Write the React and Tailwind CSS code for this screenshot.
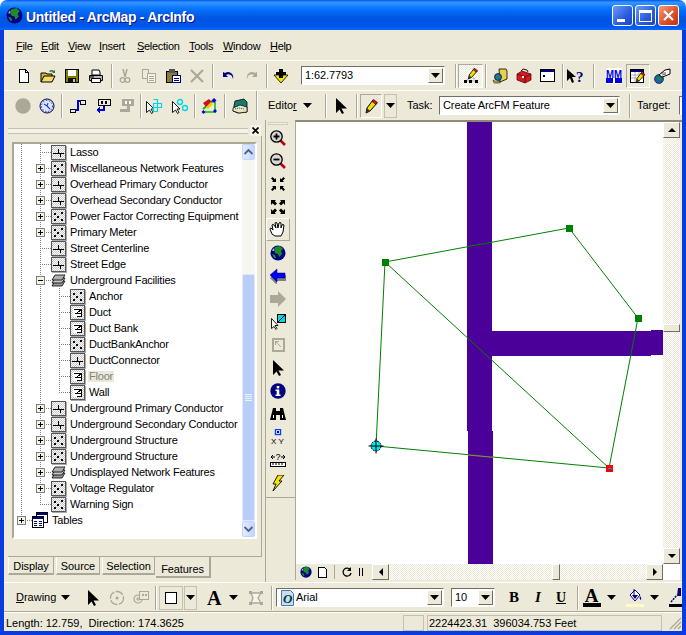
import React from 'react';

const dither = 'bg-[repeating-conic-gradient(#ffffff_0%_25%,#ece9d8_0%_50%)] bg-[length:2px_2px]';

const Svg = ({ w = 16, h = 16, crisp = false, children }) => (
  <svg width={w} height={h} viewBox={`0 0 ${w} ${h}`} shapeRendering={crisp ? 'crispEdges' : 'auto'} className="block shrink-0">
    {children}
  </svg>
);

const Globe = ({ size = 16 }) => (
  <svg width={size} height={size} viewBox="0 0 16 16" className="block shrink-0">
    <circle cx="8" cy="8" r="7.5" fill="#000080" />
    <path d="M5 2l5-1 3 3-2 2 1 3-3 3-1-3-3-1-1-3z" fill="#1f8a2c" />
    <path d="M2 9l3 1 1 3-2 0z" fill="#1f8a2c" />
    <path d="M2 6a6 6 0 0 1 2-3l0 3z" fill="#9db3c8" />
  </svg>
);

const Pencil = () => (
  <>
    <path d="M10 2l4 3-7 8-4 2 1-5z" fill="#f2e200" stroke="#000" strokeWidth="1" />
    <path d="M10.500 1.500l4 3-1.500 2-4-3z" fill="#e8101c" stroke="#000" strokeWidth=".6" />
    <path d="M4 10l3 3-4 2z" fill="#333" />
  </>
);

const icons = {
  newDoc: (
    <Svg crisp><path d="M3.500 1.500h6l3 3v10h-9z" fill="#fff" stroke="#000" /><path d="M9.500 1.500v3h3" fill="none" stroke="#000" /></Svg>
  ),
  open: (
    <Svg>
      <path d="M1 14V5h5l1 1h5v2" fill="#d8b838" stroke="#000" />
      <path d="M1 14l3-6h11l-3 6z" fill="#f3dc6a" stroke="#000" />
      <path d="M9 3q3-2 5 0l1-1v3h-3l1-1q-2-1-3 0z" fill="#2a7a2a" />
    </Svg>
  ),
  save: (
    <Svg crisp>
      <rect x="1.500" y="1.500" width="13" height="13" fill="#808000" stroke="#000" />
      <rect x="4" y="2" width="8" height="6" fill="#fff" />
      <rect x="4" y="10" width="8" height="4" fill="#111" />
      <rect x="9" y="11" width="2" height="3" fill="#c0c0c0" />
    </Svg>
  ),
  print: (
    <Svg>
      <path d="M4 7V2h7l1 2v3z" fill="#fff" stroke="#000" />
      <path d="M1.500 7.500h13v5h-13z" fill="#b8b8b8" stroke="#000" />
      <path d="M3.500 10.500h9v4h-9z" fill="#fff" stroke="#000" />
      <path d="M2 9h4" stroke="#000" />
    </Svg>
  ),
  cut: (
    <Svg>
      <path d="M6 1l2 8M10 1L8 9" stroke="#aca899" strokeWidth="1.500" fill="none" />
      <circle cx="5.500" cy="12" r="2.300" fill="none" stroke="#aca899" strokeWidth="1.300" />
      <circle cx="10.500" cy="12" r="2.300" fill="none" stroke="#aca899" strokeWidth="1.300" />
    </Svg>
  ),
  copy: (
    <Svg crisp>
      <path d="M1.500 1.500h6v9h-6z" fill="#ece9d8" stroke="#aca899" />
      <path d="M6.500 5.500h8v9h-8z" fill="#f6f4ea" stroke="#aca899" />
      <path d="M8 8h5M8 10h5M8 12h5" stroke="#aca899" />
    </Svg>
  ),
  paste: (
    <Svg crisp>
      <rect x="1.500" y="3.500" width="11" height="11" fill="#8c7a3c" stroke="#000" />
      <rect x="4" y="1" width="6" height="4" fill="#555" />
      <rect x="7.500" y="7.500" width="8" height="7" fill="#fff" stroke="#000080" />
      <path d="M9 10h5M9 12h5" stroke="#000080" />
    </Svg>
  ),
  del: (
    <Svg><path d="M2 2l12 12M14 2L2 14" stroke="#aca899" strokeWidth="2.200" /></Svg>
  ),
  undo: (
    <Svg><path d="M3 4v5h5L6 7q3-2 6 1l1 3q1-4-2-6-3-2-6 0z" fill="#000080" /></Svg>
  ),
  redo: (
    <Svg><path d="M13 4v5H8l2-2q-3-2-6 1l-1 3q-1-4 2-6 3-2 6 0z" fill="#aca899" /></Svg>
  ),
  addData: (
    <Svg>
      <path d="M1 7h14l-7 8z" fill="#f5e400" stroke="#000" strokeWidth=".8" />
      <path d="M6 1h4v3h3v3H3V4h3z" fill="#000" />
      <path d="M6 7h4v3H6z" fill="#000" />
    </Svg>
  ),
  editTool: (
    <Svg>
      <path d="M3 13l5-6 5 6z" fill="none" stroke="#666" strokeDasharray="1 1" />
      <rect x="1" y="12" width="3" height="3" fill="#000" /><rect x="6" y="12" width="3" height="3" fill="#000" /><rect x="12" y="12" width="3" height="3" fill="#000" />
      <g transform="translate(3 -1) scale(.8)"><Pencil /></g>
    </Svg>
  ),
  catalog: (
    <Svg>
      <path d="M7 1h7l1 2v8l-7 3z" fill="#e8d14a" stroke="#000" strokeWidth=".8" />
      <circle cx="6" cy="9" r="3.500" fill="#1f6fc0" stroke="#000" strokeWidth=".7" />
      <path d="M4 8h3v2H4z" fill="#1f8a2c" />
      <path d="M1 12l4 2 3-1v2H2z" fill="#d8c030" stroke="#000" strokeWidth=".5" />
    </Svg>
  ),
  toolbox: (
    <Svg>
      <path d="M1 6l5-3 9 3v6l-6 3-8-3z" fill="#d01a24" stroke="#400" strokeWidth=".7" />
      <path d="M5 3l2-2 4 1 1 2" fill="none" stroke="#400" />
      <path d="M1 6l8 3 6-3M9 9v6" fill="none" stroke="#600" strokeWidth=".8" />
      <rect x="6" y="8" width="2" height="2" fill="#fff" />
    </Svg>
  ),
  cmd: (
    <Svg crisp>
      <rect x=".500" y="1.500" width="14" height="12" fill="#fff" stroke="#000" />
      <rect x="1" y="2" width="13" height="2" fill="#000080" />
      <path d="M3 7l2 1-2 1" fill="none" stroke="#000" />
    </Svg>
  ),
  whatsThis: (
    <Svg w={20}>
      <path d="M1 1v12l3-3 2 5 2-1-2-5h4z" fill="#000" />
      <text x="10" y="14" fontFamily="Liberation Serif, serif" fontWeight="700" fontSize="15" fill="#000080">?</text>
    </Svg>
  ),
  mm: (
    <Svg>
      <rect x="0" y="0" width="16" height="16" fill="#fff" />
      <rect x="0" y="10" width="7" height="5" fill="#0000e0" />
      <rect x="9" y="10" width="7" height="5" fill="#0000e0" />
      <text x="0" y="10" fontFamily="Liberation Sans, sans-serif" fontWeight="700" fontSize="10" textLength="16" lengthAdjust="spacingAndGlyphs" fill="#0000e0">MM</text>
    </Svg>
  ),
  tablePen: (
    <Svg>
      <rect x=".500" y="1.500" width="13" height="13" fill="#fff" stroke="#000" />
      <rect x="1" y="2" width="12" height="2" fill="#000080" />
      <path d="M1 7h12M1 10h12M5 4v10M9 4v10" stroke="#808080" strokeWidth=".6" />
      <g transform="translate(4 3) scale(.75)"><Pencil /></g>
    </Svg>
  ),
  handGlobe: (
    <Svg w={18}>
      <circle cx="6" cy="11" r="4.500" fill="#1860b0" stroke="#000" strokeWidth=".6" />
      <path d="M4 9h4v3H5z" fill="#1f8a2c" />
      <path d="M6 7l6-5 5-1v5l-5 2-3 1z" fill="#fff" stroke="#000" />
      <path d="M8 5l5 0M9 7l4-1" stroke="#000" strokeWidth=".6" />
    </Svg>
  ),
  grayDot: (
    <Svg><circle cx="8" cy="8" r="7.700" fill="#aca899" /></Svg>
  ),
  clock: (
    <Svg>
      <circle cx="8" cy="8" r="7" fill="#dfe6ff" stroke="#000040" />
      <circle cx="8" cy="8" r="5.500" fill="none" stroke="#2040d0" strokeDasharray="1.500 1.500" />
      <path d="M5 6l3 2 3 3M8 8l1-3" stroke="#2040d0" strokeWidth="1.100" fill="none" />
    </Svg>
  ),
  flow: (
    <Svg crisp>
      <rect x=".500" y="11.500" width="5" height="3" fill="#ece9d8" stroke="#000" />
      <rect x="10.500" y="2.500" width="5" height="4" fill="#ece9d8" stroke="#000" />
      <path d="M5 12h3V3h3" fill="none" stroke="#0000d0" strokeWidth="2" />
    </Svg>
  ),
  flowBox: (
    <Svg crisp>
      <rect x="3.500" y="1.500" width="12" height="6" fill="#ece9d8" stroke="#000" />
      <rect x="6" y="3" width="2" height="3" fill="#000" /><rect x="10" y="3" width="2" height="3" fill="#000" />
      <path d="M9 8v4H3" fill="none" stroke="#0000d0" strokeWidth="2" />
      <path d="M1 12l4-3v6z" fill="#0000d0" />
    </Svg>
  ),
  flowBoxOff: (
    <Svg crisp>
      <rect x="3" y="1" width="12" height="7" fill="#aca899" />
      <rect x="6" y="3" width="2" height="3" fill="#fff" /><rect x="10" y="3" width="2" height="3" fill="#fff" />
      <path d="M9 8v4H1" fill="none" stroke="#aca899" strokeWidth="3" />
    </Svg>
  ),
  selCross: (
    <Svg w={18}>
      <path d="M1.500 3.500v11l3-2.500 2 3.500 1.500-1-2-3.500h3z" fill="#fff" stroke="#000" strokeWidth=".9" />
      <path d="M8.500 1.500h4v4h4v4h-4v4h-4v-4" fill="none" stroke="#00d8e8" strokeWidth="1.200" />
      <path d="M8.500 5.500v4h4v-4z" fill="none" stroke="#00d8e8" strokeWidth="1.200" />
    </Svg>
  ),
  selCircles: (
    <Svg w={18}>
      <path d="M1.500 3.500v11l3-2.500 2 3.500 1.500-1-2-3.500h3z" fill="#fff" stroke="#000" strokeWidth=".9" />
      <circle cx="9" cy="4" r="2.500" fill="none" stroke="#00d8e8" strokeWidth="1.400" />
      <circle cx="14" cy="10" r="2.500" fill="none" stroke="#00d8e8" strokeWidth="1.400" />
    </Svg>
  ),
  network: (
    <Svg>
      <path d="M2 11L13 2" stroke="#00c000" strokeWidth="2" />
      <path d="M4 14h10V4" stroke="#00c000" strokeWidth="1.500" fill="none" />
      <path d="M2 5l6-4 3 3-6 5z" fill="#d01020" />
      <path d="M5 9l5-5 2 2-5 5z" fill="#e8d000" />
      <path d="M13 0l2.500 2.500L13 5l-2.500-2.500z" fill="#0000e0" />
      <path d="M2.500 12l2 2-2 2-2-2z" fill="#0000e0" />
      <path d="M14 11l2 2-2 2-2-2z" fill="#0000e0" />
    </Svg>
  ),
  layout: (
    <Svg>
      <path d="M3 3l9-2 3 3v10l-9 1-5-2z" fill="#1a7a70" stroke="#000" strokeWidth=".8" />
      <path d="M1 10l7-3 7 2v5l-8 1-6-2z" fill="#e8e4c8" stroke="#000" strokeWidth=".7" />
      <path d="M3 11l4-1 5 1" stroke="#0a6a60" strokeDasharray="1 1" fill="none" />
    </Svg>
  ),
  cursor: (
    <Svg><path d="M3 0v15l3.500-3.500 2.500 4.500 2-1-2.500-4.500H14z" fill="#000" /></Svg>
  ),
  rotate: (
    <Svg>
      <circle cx="8" cy="8" r="6.500" fill="none" stroke="#aca899" strokeWidth="1.300" strokeDasharray="8 1.500" />
      <circle cx="8" cy="8" r="1.500" fill="#aca899" />
    </Svg>
  ),
  multi: (
    <Svg>
      <circle cx="5" cy="9" r="4" fill="none" stroke="#aca899" strokeWidth="1.200" />
      <path d="M3 9h4M5 7v4" stroke="#aca899" />
      <rect x="6.500" y="1.500" width="9" height="8" fill="#ece9d8" stroke="#aca899" />
      <path d="M9 4h2v2H9zM12 4h2v2h-2z" fill="#aca899" />
    </Svg>
  ),
  vertices: (
    <Svg>
      <path d="M3 3h10l-3 5 3 5H3l2-5z" fill="#f6f4ea" stroke="#aca899" strokeWidth="1.300" />
      <rect x="1" y="1" width="3" height="3" fill="#aca899" /><rect x="12" y="1" width="3" height="3" fill="#aca899" />
      <rect x="1" y="12" width="3" height="3" fill="#aca899" /><rect x="12" y="12" width="3" height="3" fill="#aca899" />
    </Svg>
  ),
  zoomIn: (
    <Svg>
      <path d="M10 10l5 5" stroke="#c00018" strokeWidth="2.600" />
      <circle cx="6.500" cy="6.500" r="5.700" fill="#d8d8d8" stroke="#000" strokeWidth="1.300" />
      <path d="M3.500 6.500h6M6.500 3.500v6" stroke="#000" strokeWidth="1.800" />
    </Svg>
  ),
  zoomOut: (
    <Svg>
      <path d="M10 10l5 5" stroke="#c00018" strokeWidth="2.600" />
      <circle cx="6.500" cy="6.500" r="5.700" fill="#d8d8d8" stroke="#000" strokeWidth="1.300" />
      <path d="M3.500 6.500h6" stroke="#000" strokeWidth="1.800" />
    </Svg>
  ),
  fixedIn: (
    <Svg>
      <path d="M6 6H2l1.200-1.200L1 2.500 2.500 1l2.300 2.200L6 2zM10 6h4l-1.200-1.200L15 2.500 13.500 1l-2.300 2.200L10 2zM6 10H2l1.200 1.200L1 13.500 2.500 15l2.300-2.200L6 14zM10 10h4l-1.200 1.200L15 13.500 13.500 15l-2.300-2.200L10 14z" fill="#000" />
    </Svg>
  ),
  fixedOut: (
    <Svg>
      <path d="M1 1h5L4.800 2.200 7 4.500 5 6.500 2.700 4.300 1 6zM15 1h-5l1.200 1.200L9 4.500l2 2 2.300-2.200L15 6zM1 15h5l-1.200-1.200L7 11.500l-2-2-2.300 2.200L1 10zM15 15h-5l1.200-1.200L9 11.500l2-2 2.300 2.200L15 10z" fill="#000" />
    </Svg>
  ),
  hand: (
    <Svg w={18} h={18}>
      <path d="M3 13L1 8q0-1 1-1l2 2-1-5q1-1 2 0l2 3-1-5q1-1 2 0l1 5 1-5q1-1 2 0v5l1-3q1-1 2 0l-1 7-2 4H6z" fill="#fff" stroke="#000" strokeWidth="1" />
    </Svg>
  ),
  back: (
    <Svg>
      <path d="M0 8l7-7v4h9v6H7v4z" fill="#808080" transform="translate(0 2)" />
      <path d="M0 7l7-6v4h8v5H7v4z" fill="#0000f0" stroke="#000080" strokeWidth=".5" />
    </Svg>
  ),
  forward: (
    <Svg><path d="M16 8L8 0v4H0v8h8v4z" fill="#aca899" /></Svg>
  ),
  selectEl: (
    <Svg>
      <path d="M1.500 4.500v10l2.500-2 2 3 1-1-2-3h3z" fill="#fff" stroke="#000" strokeWidth=".9" />
      <rect x="7.500" y=".500" width="8" height="8" fill="#00d8e8" stroke="#000" />
      <path d="M8 8l7-7" stroke="#000" />
    </Svg>
  ),
  selectOff: (
    <Svg crisp>
      <rect x="2.500" y="1.500" width="11" height="12" fill="#ece9d8" stroke="#aca899" strokeWidth="2" />
      <path d="M5 4l6 6M5 4v4M5 4h4" stroke="#aca899" fill="none" />
    </Svg>
  ),
  info: (
    <Svg>
      <circle cx="8" cy="8" r="7.700" fill="#000080" />
      <rect x="6.700" y="3" width="2.600" height="2.400" fill="#fff" />
      <path d="M5.500 6.500h3.800v5h1.200v1.500h-5v-1.500h1.200V8H5.500z" fill="#fff" />
    </Svg>
  ),
  binoculars: (
    <Svg>
      <path d="M3 2h3v3h4V2h3l3 12H10V9H6v5H0z" fill="#000" />
      <path d="M3 9h1v3H3zM12 9h1v3h-1z" fill="#fff" />
    </Svg>
  ),
  xy: (
    <Svg>
      <rect x="5.500" y="0.500" width="5" height="5" fill="#fff" stroke="#0040ff" strokeWidth="1.400" />
      <rect x="7" y="2" width="2" height="2" fill="#000080" />
      <text x="1" y="15" fontFamily="Liberation Sans, sans-serif" fontSize="8" fill="#000">X Y</text>
    </Svg>
  ),
  measure: (
    <Svg>
      <path d="M1 5h4M1 5l2-2M1 5l2 2M15 5h-4M15 5l-2-2M15 5l-2 2" stroke="#000" fill="none" />
      <text x="5.500" y="8" fontFamily="Liberation Sans, sans-serif" fontSize="9" fill="#000">?</text>
      <rect x=".500" y="10.500" width="15" height="4" fill="#fff" stroke="#000" />
      <path d="M3 11v2M6 11v2M9 11v2M12 11v2" stroke="#000" />
    </Svg>
  ),
  flash: (
    <Svg><path d="M8 0h6L9 6h3L3 16l3-7H3z" fill="#f5e400" stroke="#000" strokeWidth=".9" /></Svg>
  ),
  pencilBig: (
    <Svg><Pencil /></Svg>
  ),
  fontFile: (
    <Svg w={13} h={16}>
      <path d="M.500.500h9l3 3v12H.500z" fill="#c8dcf4" stroke="#4878b0" />
      <text x="2" y="13" fontFamily="Liberation Serif, serif" fontStyle="italic" fontWeight="700" fontSize="13" fill="#003c30">O</text>
    </Svg>
  ),
  bucket: (
    <Svg>
      <path d="M3 7l5-5 5 5-5 6z" fill="#fff" stroke="#000080" />
      <path d="M5 7h6l-3 4z" fill="#000080" />
      <path d="M7 1v6" stroke="#000080" />
      <path d="M13 8q2 2 1 4-2-1-1-4z" fill="#000080" />
    </Svg>
  ),
  lineColor: (
    <Svg w={12}>
      <path d="M2 14l6-7" stroke="#000080" strokeWidth="1.500" strokeDasharray="2 1" />
      <path d="M9 0l3 0v8H8z" fill="#000080" />
    </Svg>
  ),
};

const Caret = ({ w = 9 }) => (
  <svg width={w} height="5" viewBox="0 0 9 5" className="block shrink-0"><path d="M0 0h9L4.500 5z" fill="#000" /></svg>
);

const Sep = ({ className = '' }) => <div className={`h-[24px] w-[2px] shrink-0 border-l border-r border-l-[#aca899] border-r-white ${className}`} />;

const Btn = ({ icon, className = 'w-[24px]' }) => (
  <div className={`flex h-[24px] shrink-0 items-center justify-center ${className}`}>{icons[icon]}</div>
);

const Pressed = ({ icon, className = 'w-[24px]', hatch = false }) => (
  <div className={`flex h-[24px] shrink-0 items-center justify-center border border-t-[#aca899] border-l-[#aca899] border-r-white border-b-white ${hatch ? dither : ''} ${className}`}>
    {icons[icon]}
  </div>
);

const DropBtn = ({ className = 'w-[15px]' }) => (
  <div className={`flex h-[15px] shrink-0 items-center justify-center border border-t-white border-l-white border-b-[#716f64] border-r-[#716f64] bg-[#ece9d8] ${className}`}>
    <Caret />
  </div>
);

const Combo = ({ text, className, icon }) => (
  <div className={`flex h-[19px] shrink-0 items-center border border-t-[#716f64] border-l-[#716f64] border-b-white border-r-white bg-white pr-[1px] ${className}`}>
    {icon && <div className="ml-[4px] mr-[2px]">{icons[icon]}</div>}
    <span className={`flex-1 truncate tracking-[-0.1px] ${icon ? '' : 'pl-[3px]'}`}>{text}</span>
    <DropBtn />
  </div>
);

const Toolbar = ({ children }) => (
  <div className="flex h-[30px] shrink-0 items-center overflow-hidden border-t border-t-white">{children}</div>
);

const menuItems = [
  ['F', 'ile', 'w-[25px]'],
  ['E', 'dit', 'w-[27px]'],
  ['V', 'iew', 'w-[31px]'],
  ['I', 'nsert', 'w-[38px]'],
  ['S', 'election', 'w-[52px]'],
  ['T', 'ools', 'w-[34px]'],
  ['W', 'indow', 'w-[47px]'],
  ['H', 'elp', 'w-[30px]'],
];

const TitleBar = () => (
  <div className="flex h-[30px] shrink-0 items-center rounded-t-[7px] bg-[linear-gradient(180deg,#0058ee_0%,#3593ff_8%,#288eff_14%,#127dff_22%,#036ffc_34%,#0262ee_46%,#0057e5_58%,#0054e3_74%,#0055eb_86%,#005bf5_93%,#026afe_97%,#0062ef_100%)] pl-[6px] pr-[7px] pt-[1px]">
    <Globe size={17} />
    <span className="ml-[3px] mt-[2px] flex-1 text-[14px] font-bold tracking-[-0.3px] text-white [text-shadow:1px_1px_#0f1089]">Untitled - ArcMap - ArcInfo</span>
    <div className="flex h-[21px] w-[21px] items-end justify-start rounded-[3px] border border-white bg-[linear-gradient(135deg,#6f9bf5,#2a5be0_60%,#1d44c8)] pb-[3px] pl-[4px]">
      <div className="h-[3px] w-[8px] bg-white" />
    </div>
    <div className="ml-[2px] flex h-[21px] w-[21px] items-center justify-center rounded-[3px] border border-white bg-[linear-gradient(135deg,#6f9bf5,#2a5be0_60%,#1d44c8)]">
      <div className="h-[12px] w-[13px] border border-t-[3px] border-white" />
    </div>
    <div className="ml-[2px] flex h-[21px] w-[21px] items-center justify-center rounded-[3px] border border-white bg-[linear-gradient(135deg,#f0a080,#e0502c_55%,#c03010)]">
      <svg width="11" height="11" viewBox="0 0 11 11" className="block"><path d="M1 1l9 9M10 1l-9 9" stroke="#fff" strokeWidth="2.200" /></svg>
    </div>
  </div>
);

const MenuBar = () => (
  <div className="flex h-[30px] shrink-0 items-center pl-[12px] pt-[2px] tracking-[-0.3px]">
    {menuItems.map(([key, rest, width]) => (
      <span key={key} className={width}><u>{key}</u>{rest}</span>
    ))}
  </div>
);

const StandardBar = () => (
  <Toolbar>
    <div className="w-[8px] shrink-0" />
    <Btn icon="newDoc" /><Btn icon="open" /><Btn icon="save" /><Btn icon="print" />
    <Sep className="ml-[3px]" />
    <Btn icon="cut" /><Btn icon="copy" /><Btn icon="paste" /><Btn icon="del" />
    <Sep className="ml-[3px]" />
    <div className="w-[2px] shrink-0" />
    <Btn icon="undo" /><Btn icon="redo" />
    <Sep className="ml-[2px]" />
    <div className="w-[1px] shrink-0" />
    <Btn icon="addData" />
    <Combo text="1:62.7793" className="ml-[8px] w-[144px]" />
    <Sep className="ml-[10px]" />
    <Pressed icon="editTool" hatch className="ml-[1px] w-[25px]" />
    <Sep className="ml-[2px]" />
    <div className="w-[1px] shrink-0" />
    <Btn icon="catalog" /><Btn icon="toolbox" /><Btn icon="cmd" />
    <Sep className="ml-[2px]" />
    <Btn icon="whatsThis" />
    <Sep className="ml-[5px]" />
    <div className="w-[7px] shrink-0" />
    <Btn icon="mm" />
    <Pressed icon="tablePen" />
    <Btn icon="handGlobe" />
  </Toolbar>
);

const EditorBar = () => (
  <Toolbar>
    <div className="w-[7px] shrink-0" />
    <Btn icon="grayDot" /><Btn icon="clock" />
    <Sep className="ml-[2px]" />
    <div className="w-[3px] shrink-0" />
    <Btn icon="flow" /><Btn icon="flowBox" className="ml-[1px] w-[24px]" /><Btn icon="flowBoxOff" />
    <Sep className="ml-[1px]" />
    <Btn icon="selCross" /><Btn icon="selCircles" className="ml-[2px] w-[24px]" />
    <Sep className="ml-[2px]" />
    <div className="w-[1px] shrink-0" />
    <Btn icon="network" />
    <Sep className="ml-[3px]" />
    <div className="w-[2px] shrink-0" />
    <Btn icon="layout" />
    <div className="ml-[4px] h-[29px] w-[2px] shrink-0 border-l border-r border-l-[#aca899] border-r-white" />
    <span className="ml-[10px] w-[35px] shrink-0">Edito<u>r</u></span>
    <Caret />
    <Sep className="ml-[13px]" />
    <div className="w-[2px] shrink-0" />
    <Btn icon="cursor" />
    <Sep className="ml-[3px]" />
    <Pressed icon="pencilBig" className="ml-[2px] w-[22px]" />
    <div className="ml-[2px] flex h-[24px] w-[13px] shrink-0 items-center justify-center border border-[#c4c1b0]"><Caret /></div>
    <span className="ml-[10px] w-[32px] shrink-0">Task:</span>
    <Combo text="Create ArcFM Feature" className="w-[181px]" />
    <Sep className="ml-[9px]" />
    <span className="ml-[6px] w-[42px] shrink-0">Target:</span>
    <div className="h-[19px] w-[20px] shrink-0 border border-t-[#716f64] border-l-[#716f64] border-b-white bg-white" />
  </Toolbar>
);

// tree connector pieces, drawn on the 16px row grid
const Guide = ({ w = 19 }) => (
  <svg width={w} height="16" className="block shrink-0" shapeRendering="crispEdges">
    <path d="M4.500 0v16" stroke="#808080" strokeDasharray="1 1" />
  </svg>
);

const Conn = ({ type, end = false }) => (
  <svg width="15" height="16" className="block shrink-0" shapeRendering="crispEdges">
    <path d={type === 'last' || end ? 'M4.500 0v8' : 'M4.500 0v16'} stroke="#808080" strokeDasharray="1 1" />
    <path d="M4 8.500h11" stroke="#808080" strokeDasharray="1 1" />
    {(type === 'plus' || type === 'minus') && (
      <>
        <rect x=".500" y="4.500" width="8" height="8" fill="#f4f2e8" stroke="#808080" />
        <path d="M2 8.500h5" stroke="#000" />
        {type === 'plus' && <path d="M4.500 6v5" stroke="#000" />}
      </>
    )}
  </svg>
);

const Feat = ({ kind }) => (
  <div className="flex h-[15px] w-[15px] shrink-0 items-center justify-center border border-[#555] bg-[repeating-conic-gradient(#c8c8c8_0%_25%,#ffffff_0%_50%)] bg-[length:2px_2px] shadow-[1px_1px_0_#aaa]">
    <svg width="13" height="13" viewBox="0 0 13 13" shapeRendering="crispEdges" className="block">
      {kind === 'dots' && <path d="M2 3h2v2H2zM9 2h2v2H9zM5 6h2v2H5zM2 9h2v2H2zM9 9h2v2H9z" fill="#000" />}
      {kind === 'line' && <path d="M1 7.500h11M6.500 3v4.500M8.500 7.500v3" stroke="#000" fill="none" />}
      {kind === 'poly' && (
        <>
          <rect x="2" y="2" width="9" height="9" fill="#fff" />
          <path d="M2.500 3.500h8v7h-5M10 4L6 7h4" stroke="#000" fill="none" />
        </>
      )}
    </svg>
  </div>
);

const Stack = () => (
  <svg width="15" height="15" viewBox="0 0 15 15" className="block shrink-0">
    <path d="M4 8h10l-3 5H1z" fill="#9a9a9a" stroke="#000" strokeWidth=".8" />
    <path d="M4 5h10l-3 5H1z" fill="#c4c4c4" stroke="#000" strokeWidth=".8" />
    <path d="M4 2h10l-3 5H1z" fill="#b0b0b0" stroke="#000" strokeWidth=".8" />
  </svg>
);

const TablesIcon = () => (
  <svg width="16" height="16" viewBox="0 0 16 16" className="block shrink-0" shapeRendering="crispEdges">
    <rect x="4.500" y=".500" width="11" height="10" fill="#fff" stroke="#000" />
    <rect x="5" y="1" width="10" height="2" fill="#000080" />
    <rect x=".500" y="4.500" width="11" height="11" fill="#fff" stroke="#000" />
    <rect x="1" y="5" width="10" height="2" fill="#000080" />
    <path d="M2 9h3M7 9h3M2 11h3M7 11h3M2 13h3M7 13h3" stroke="#000080" />
  </svg>
);

// [level, connector, icon, label]
const rows = [
  [1, 'tee', 'line', 'Lasso'],
  [1, 'plus', 'dots', 'Miscellaneous Network Features'],
  [1, 'plus', 'line', 'Overhead Primary Conductor'],
  [1, 'plus', 'line', 'Overhead Secondary Conductor'],
  [1, 'plus', 'dots', 'Power Factor Correcting Equipment'],
  [1, 'plus', 'dots', 'Primary Meter'],
  [1, 'tee', 'line', 'Street Centerline'],
  [1, 'tee', 'line', 'Street Edge'],
  [1, 'minus', 'stack', 'Underground Facilities'],
  [2, 'tee', 'dots', 'Anchor'],
  [2, 'tee', 'poly', 'Duct'],
  [2, 'tee', 'poly', 'Duct Bank'],
  [2, 'tee', 'dots', 'DuctBankAnchor'],
  [2, 'tee', 'line', 'DuctConnector'],
  [2, 'tee', 'poly', 'Floor'],
  [2, 'last', 'poly', 'Wall'],
  [1, 'plus', 'line', 'Underground Primary Conductor'],
  [1, 'plus', 'line', 'Underground Secondary Conductor'],
  [1, 'plus', 'dots', 'Underground Structure'],
  [1, 'plus', 'dots', 'Underground Structure'],
  [1, 'plus', 'stack', 'Undisplayed Network Features'],
  [1, 'plus', 'dots', 'Voltage Regulator'],
  [1, 'last', 'dots', 'Warning Sign'],
];

const TreeRow = ({ level, conn, icon, label }) => (
  <div className="flex h-[16px] items-center whitespace-nowrap pl-[3px]">
    <Guide />
    {level === 2 && <Guide />}
    <Conn type={conn} />
    {icon === 'stack' ? <Stack /> : <Feat kind={icon} />}
    {label === 'Floor' ? (
      <span className="ml-[3px] bg-[#ece9d8] px-[1px] text-[#808080]">{label}</span>
    ) : (
      <span className="ml-[4px]">{label}</span>
    )}
  </div>
);

const Chevron = ({ up }) => (
  <svg width="9" height="6" viewBox="0 0 9 6" className="block"><path d={up ? 'M.500 5l4-4 4 4' : 'M.500 1l4 4 4-4'} fill="none" stroke="#4d6185" strokeWidth="1.800" /></svg>
);

const BlueArrowBtn = ({ up }) => (
  <div className="flex h-[16px] shrink-0 items-center justify-center rounded-[2px] border border-[#c5d4f8] bg-[linear-gradient(90deg,#e4ecfd,#c3d5fd)]">
    <Chevron up={up} />
  </div>
);

const TreeScrollbar = () => (
  <div className="flex w-[13px] shrink-0 flex-col bg-[#f7f7f2]">
    <BlueArrowBtn up />
    <div className="h-[114px]" />
    <div className="flex h-[247px] flex-col items-center justify-center gap-[1px] rounded-[2px] border border-[#e0e8fc] bg-[#b9cdf9]">
      <div className="h-[1px] w-[7px] bg-[#eef3fe]" />
      <div className="h-[1px] w-[7px] bg-[#eef3fe]" />
      <div className="h-[1px] w-[7px] bg-[#eef3fe]" />
      <div className="h-[1px] w-[7px] bg-[#eef3fe]" />
    </div>
    <div className="flex-1" />
    <BlueArrowBtn />
  </div>
);

const tabs = [
  ['Display', 'w-[46px]'],
  ['Source', 'ml-[2px] w-[44px]'],
  ['Selection', 'ml-[2px] w-[53px]'],
];

const LeftPanel = () => (
  <div className="w-[258px] shrink-0 pl-[4px] pt-[5px]">
    <div className="flex h-[11px] items-center pr-[1px]">
      <div className="mr-[2px] h-[6px] flex-1 border-y border-y-[#c4c1b0] bg-[#f4f2e8]" />
      <div className="flex h-[11px] w-[11px] items-center justify-center bg-[#f6f4ea]">
        <svg width="7" height="7" viewBox="0 0 7 7" className="block"><path d="M.500.500l6 6M6.500.500l-6 6" stroke="#000" strokeWidth="1.700" /></svg>
      </div>
    </div>
    <div className="h-[421px] border-b border-r border-b-[#aca899] border-r-[#aca899] pt-[6px]">
      <div className="ml-[4px] flex h-[397px] w-[245px] border-2 border-b-white border-l-[#aca899] border-r-white border-t-[#aca899] bg-white tracking-[-0.2px]">
        <div className="flex-1 overflow-hidden">
          {rows.map(([level, conn, icon, label], i) => (
            <TreeRow key={i} level={level} conn={conn} icon={icon} label={label} />
          ))}
          <div className="flex h-[16px] items-center whitespace-nowrap pl-[3px]">
            <Conn type="plus" end />
            <TablesIcon />
            <span className="ml-[4px]">Tables</span>
          </div>
        </div>
        <TreeScrollbar />
      </div>
    </div>
    <div className="flex h-[21px] tracking-[-0.1px]">
      {tabs.map(([label, width]) => (
        <div key={label} className={`flex h-[18px] items-center justify-center border-b-2 border-l border-r border-b-[#aca899] border-l-white border-r-[#aca899] pt-[3px] ${width}`}>
          {label}
        </div>
      ))}
      <div className="ml-[1px] flex h-[21px] w-[55px] items-end justify-center border-b-2 border-r-2 border-b-[#aca899] border-r-[#aca899] pb-[1px]">Features</div>
    </div>
  </div>
);

const vtools = ['zoomIn', 'zoomOut', 'fixedIn', 'fixedOut', 'hand', 'globe', 'back', 'forward', 'selectEl', 'selectOff', 'cursor', 'info', 'binoculars', 'xy', 'measure', 'flash'];

const ToolStrip = () => (
  <div className="ml-[3px] flex w-[30px] shrink-0 flex-col">
    <div className="h-[378px] border-b border-l border-b-[#aca899] border-l-[#aca899] pr-[5px] pt-[2px]">
      <div className="mx-[2px] h-[3px] border border-[#d0cdbc] bg-[#f4f2e8]" />
      <div className="mt-[1px] flex flex-col items-center">
        {vtools.map((tool) => (
          <div key={tool} className="flex h-[23px] items-center justify-center">
            {tool === 'hand' ? (
              <div className="flex h-[23px] w-[24px] items-center justify-center border border-b-[#aca899] border-l-white border-r-[#aca899] border-t-white">{icons.hand}</div>
            ) : tool === 'globe' ? (
              <Globe />
            ) : (
              icons[tool]
            )}
          </div>
        ))}
      </div>
    </div>
    <div className="flex-1 border-l border-l-[#aca899]" />
  </div>
);

const ArrowBtn = ({ dir, className }) => (
  <div className={`flex shrink-0 items-center justify-center border border-b-[#716f64] border-l-white border-r-[#716f64] border-t-white bg-[#ece9d8] ${className}`}>
    <svg width="8" height="8" viewBox="0 0 8 8" className="block">
      <path d={{ up: 'M0 6h8L4 2z', down: 'M0 2h8L4 6z', left: 'M6 0v8L2 4z', right: 'M2 0v8l4-4z' }[dir]} fill="#000" />
    </svg>
  </div>
);

const Thumb = ({ className }) => (
  <div className={`shrink-0 border border-b-[#716f64] border-l-white border-r-[#716f64] border-t-white bg-[#ece9d8] ${className}`} />
);

const MapCanvas = () => (
  <svg width="367" height="442" viewBox="296 122 367 442" className="block shrink-0">
    <g shapeRendering="crispEdges" fill="#4b0099">
      <rect x="467" y="122" width="25" height="309" />
      <rect x="468" y="431" width="25" height="134" />
      <rect x="492" y="331" width="159" height="25" />
      <rect x="651" y="330" width="12" height="25" />
    </g>
    <path d="M385 262L569 228L638 318L609 468L376 446L385 262L609 468" fill="none" stroke="#008000" strokeWidth="1" />
    <path d="M468 455l25 2.300" stroke="#a08050" strokeWidth="1" />
    <g shapeRendering="crispEdges">
      <rect x="382" y="259" width="7" height="7" fill="#008000" />
      <rect x="566" y="225" width="7" height="7" fill="#008000" />
      <rect x="635" y="315" width="7" height="7" fill="#008000" />
      <rect x="606" y="465" width="7" height="7" fill="#ff0000" />
      <path d="M608 468h4" stroke="#00a0e0" />
    </g>
    <circle cx="376" cy="446" r="5" fill="#00e8f0" stroke="#000" strokeDasharray="2 1" />
    <path d="M368.500 446h15M376 438.500v15" stroke="#000" strokeWidth="1" />
  </svg>
);

const MapPane = () => (
  <div className="flex w-[387px] shrink-0 flex-col">
    <div className="flex h-[444px] border-l border-t-2 border-l-[#aca899] border-t-[#8d8a7a] bg-white">
      <MapCanvas />
      <div className={`flex w-[17px] shrink-0 flex-col ${dither}`}>
        <ArrowBtn dir="up" className="h-[16px]" />
        <div className="h-[186px] shrink-0" />
        <Thumb className="h-[8px]" />
        <div className="flex-1" />
        <ArrowBtn dir="down" className="h-[16px]" />
      </div>
      <div className="w-[2px] shrink-0 bg-[#ece9d8]" />
    </div>
    <div className="flex h-[16px] border-l border-l-[#aca899]">
      <div className="flex w-[76px] shrink-0 items-center pl-[2px]">
        <div className="flex w-[16px] justify-center"><Globe size={12} /></div>
        <svg width="16" height="12" viewBox="0 0 16 12" className="block" shapeRendering="crispEdges"><path d="M4.500 1.500h6l2 2v8h-8z" fill="#fff" stroke="#000" /></svg>
        <div className="ml-[4px] mr-[6px] h-[14px] w-[1px] bg-[#aca899]" />
        <svg width="12" height="12" viewBox="0 0 12 12" className="block"><path d="M9.500 4A4 4 0 1 0 10 7" fill="none" stroke="#000" strokeWidth="1.300" /><path d="M10 1v4H6z" fill="#000" /></svg>
        <div className="ml-[6px] h-[8px] w-[4px] border-x border-x-[#000]" />
      </div>
      <div className={`flex w-[291px] shrink-0 ${dither}`}>
        <ArrowBtn dir="left" className="w-[17px]" />
        <div className="w-[163px] shrink-0" />
        <Thumb className="w-[8px]" />
        <div className="flex-1" />
        <ArrowBtn dir="right" className="w-[17px]" />
      </div>
      <div className="flex-1 bg-white" />
      <div className="w-[2px] shrink-0 bg-[#ece9d8]" />
    </div>
  </div>
);

const DrawingBar = () => (
  <Toolbar>
    <span className="ml-[12px] w-[45px] shrink-0"><u>D</u>rawing</span>
    <Caret />
    <div className="w-[11px] shrink-0" />
    <Btn icon="cursor" />
    <Btn icon="rotate" />
    <Btn icon="multi" />
    <Sep className="ml-[2px]" />
    <div className="ml-[2px] flex h-[24px] w-[24px] shrink-0 items-center justify-center border border-[#c4c1b0]">
      <div className="h-[12px] w-[12px] border border-black bg-white" />
    </div>
    <div className="ml-[1px] flex h-[24px] w-[13px] shrink-0 items-center justify-center border border-[#c4c1b0]"><Caret /></div>
    <span className="ml-[10px] w-[14px] shrink-0 text-center font-['Liberation_Serif',serif] text-[20px] font-bold leading-none">A</span>
    <div className="ml-[8px] shrink-0"><Caret /></div>
    <Btn icon="vertices" className="ml-[6px] w-[24px]" />
    <Sep className="ml-[3px]" />
    <Combo text="Arial" icon="fontFile" className="ml-[3px] w-[168px]" />
    <Combo text="10" className="ml-[7px] w-[44px]" />
    <span className="ml-[11px] w-[16px] shrink-0 text-center font-['Liberation_Serif',serif] text-[15px] font-bold leading-none">B</span>
    <span className="ml-[8px] w-[16px] shrink-0 text-center font-['Liberation_Serif',serif] text-[15px] font-bold italic leading-none">I</span>
    <span className="ml-[7px] w-[16px] shrink-0 text-center font-['Liberation_Serif',serif] text-[14px] font-bold leading-none underline">U</span>
    <Sep className="ml-[8px]" />
    <div className="ml-[3px] flex w-[19px] shrink-0 flex-col items-center">
      <span className="font-['Liberation_Serif',serif] text-[19px] font-bold leading-[15px]">A</span>
      <div className="h-[4px] w-[18px] bg-black" />
    </div>
    <div className="ml-[6px] shrink-0"><Caret /></div>
    <div className="ml-[10px] flex w-[18px] shrink-0 flex-col items-center">
      {icons.bucket}
      <div className="h-[3px] w-[18px] bg-[#fffcc8]" />
    </div>
    <div className="ml-[6px] shrink-0"><Caret /></div>
    <div className="ml-[10px] flex w-[14px] shrink-0 flex-col items-start">
      {icons.lineColor}
      <div className="h-[3px] w-[14px] bg-black" />
    </div>
  </Toolbar>
);

const StatusBar = () => (
  <div className="flex h-[19px] shrink-0 items-center border-t border-t-white pt-[2px] shadow-[0_-1px_0_#aca899]">
    <span className="ml-[2px] w-[397px] shrink-0">Length: 12.759,&nbsp; Direction: 174.3625</span>
    <div className="h-[16px] w-[21px] shrink-0 border border-[#c4c1b0]" />
    <span className="ml-[3px] flex h-[16px] w-[235px] shrink-0 items-center border border-[#c4c1b0] pl-[1px]">2224423.31&nbsp; 396034.753 Feet</span>
    <svg width="14" height="14" viewBox="0 0 14 14" className="ml-[6px] block shrink-0">
      <path d="M13 2L2 13M13 6l-7 7M13 10l-3 3" stroke="#aca899" strokeWidth="1.200" />
    </svg>
  </div>
);

export default function App() {
  return (
    <div className="flex h-[635px] w-[686px] flex-col overflow-hidden bg-white font-['Liberation_Sans',sans-serif] text-[11px] leading-none text-black">
      <TitleBar />
      <div className="flex min-h-0 flex-1 flex-col overflow-hidden border-x-4 border-b-4 border-x-[#0a3be0] border-b-[#0a3be0] bg-[#ece9d8]">
        <MenuBar />
        <StandardBar />
        <EditorBar />
        <div className="flex h-[462px] shrink-0">
          <LeftPanel />
          <ToolStrip />
          <MapPane />
        </div>
        <DrawingBar />
        <StatusBar />
      </div>
    </div>
  );
}
